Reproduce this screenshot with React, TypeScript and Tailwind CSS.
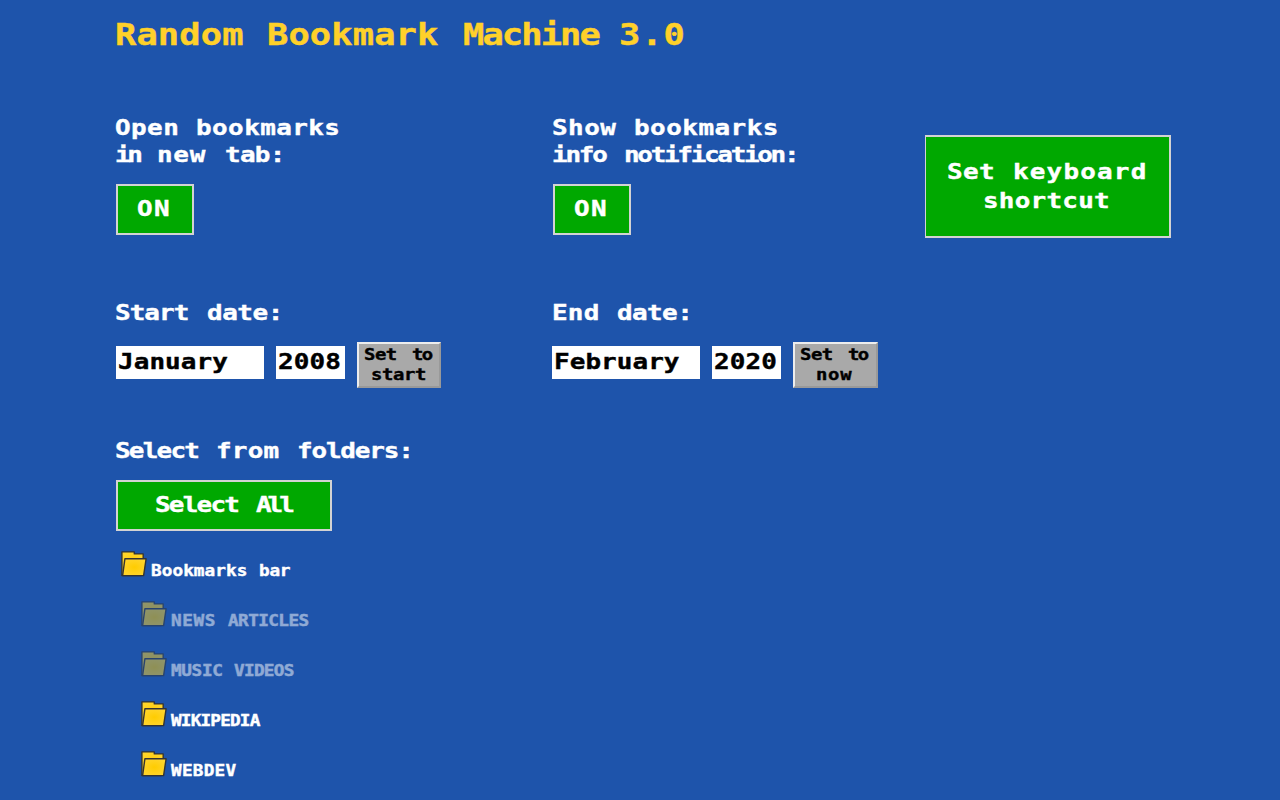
import React from "react";

type Word = { text: string; box: string };

function Line({ words, className = "" }: { words: Word[]; className?: string }) {
  return (
    <span className={`block whitespace-pre text-left ${className}`}>
      {words.map((w, i) => (
        <span key={i} className={`inline-block ${w.box}`}>
          <span className="inline-block origin-left scale-x-[1.18]">
            {i < words.length - 1 ? `${w.text} ` : w.text}
          </span>
        </span>
      ))}
    </span>
  );
}

function Toggle() {
  return (
    <button className="ml-px mt-4 flex h-[51px] w-[78px] items-center border-2 border-[#d3d3d3] bg-[#00a800] pb-0.5 pl-[19px] leading-[29px]">
      <Line words={[{ text: "ON", box: "tracking-[1.1px]" }]} />
    </button>
  );
}

type DateProps = { label: Word[]; month: string; year: string; action: Word; inset: string; wide: string; indent: string };

function DateField({ label, month, year, action, inset, wide, indent }: DateProps) {
  return (
    <section>
      <h2>
        <Line words={label} />
      </h2>
      <div className={`mt-4 flex h-[46px] items-start text-black ${inset}`}>
        <div className="mr-3 mt-1 h-[33px] w-[148px] bg-white pl-0.5 leading-[31px]">
          <Line words={[{ text: month, box: "tracking-[0.05px]" }]} />
        </div>
        <div className="mr-3 mt-1 h-[33px] w-[69px] bg-white pl-0.5 leading-[31px]">
          <Line words={[{ text: year, box: "tracking-[0.1px]" }]} />
        </div>
        <button
          className={`h-[46px] border-2 border-b-[#999999] border-l-[#ededed] border-r-[#999999] border-t-[#ededed] bg-[#a9a9a9] pl-[5px] text-[16px] leading-5 ${wide}`}
        >
          <Line
            words={[
              { text: "Set", box: "w-[48px] tracking-[-0.4px]" },
              { text: "to", box: "w-[21px] tracking-[-1.4px]" },
            ]}
          />
          <Line words={[action]} className={indent} />
        </button>
      </div>
    </section>
  );
}

function FolderIcon() {
  return (
    <svg width="26" height="26" viewBox="0 0 26 26" className="shrink-0">
      <defs>
        <radialGradient id="folderFill">
          <stop offset="0" stopColor="#ffcc00" />
          <stop offset="1" stopColor="#ffd42a" />
        </radialGradient>
      </defs>
      <g stroke="#333333" strokeWidth="1.4" strokeLinejoin="round" fill="url(#folderFill)">
        <path d="M.9 24.6V.9H13.3V2.9H22.2V8L20 24.6Z" />
        <path d="M3.9 7.8H25.1L22.6 24.6H1.6Z" />
      </g>
    </svg>
  );
}

const folders: { words: Word[]; row: string }[] = [
  {
    words: [
      { text: "Bookmarks", box: "w-[108px] tracking-[0.05px]" },
      { text: "bar", box: "tracking-[-0.2px]" },
    ],
    row: "pl-1.5",
  },
  {
    words: [
      { text: "NEWS", box: "w-[57px] tracking-[0.5px]" },
      { text: "ARTICLES", box: "tracking-[-0.5px]" },
    ],
    row: "pl-[26px] opacity-50",
  },
  {
    words: [
      { text: "MUSIC", box: "w-[63px] tracking-[-0.3px]" },
      { text: "VIDEOS", box: "tracking-[-0.6px]" },
    ],
    row: "pl-[26px] opacity-50",
  },
  { words: [{ text: "WIKIPEDIA", box: "tracking-[-0.7px]" }], row: "pl-[26px]" },
  { words: [{ text: "WEBDEV", box: "tracking-[0.2px]" }], row: "pl-[26px]" },
];

export default function App() {
  return (
    <main className="h-[800px] w-full overflow-hidden bg-[#1e54ab] pl-[115px] pt-[17px] font-['DejaVu_Sans_Mono','Liberation_Mono',monospace] text-[22px] font-bold leading-[27px] text-white [-webkit-text-stroke:0.4px_currentColor]">
      <h1 className="text-[30px] leading-9 text-[#ffd12a]">
        <Line
          words={[
            { text: "Random", box: "w-[152px] tracking-[0.1px]" },
            { text: "Bookmark", box: "w-[196px] tracking-[0.1px]" },
            { text: "Machine", box: "w-[156px] tracking-[-1.6px]" },
            { text: "3.0", box: "tracking-[0.8px]" },
          ]}
        />
      </h1>

      <div className="mt-[61px] flex h-[124px]">
        <section className="w-[437px]">
          <h2>
            <Line
              words={[
                { text: "Open", box: "w-[81px] tracking-[0.35px]" },
                { text: "bookmarks", box: "tracking-[0.35px]" },
              ]}
            />
            <Line
              words={[
                { text: "in", box: "w-[42px] tracking-[-2.8px]" },
                { text: "new", box: "w-[68px] tracking-[0.6px]" },
                { text: "tab:", box: "tracking-[-0.6px]" },
              ]}
            />
          </h2>
          <Toggle />
        </section>
        <section className="w-[373px]">
          <h2>
            <Line
              words={[
                { text: "Show", box: "w-[82px] tracking-[0.4px]" },
                { text: "bookmarks", box: "tracking-[0.4px]" },
              ]}
            />
            <Line
              words={[
                { text: "info", box: "w-[72px] tracking-[-1.9px]" },
                { text: "notification:", box: "tracking-[-1.95px]" },
              ]}
            />
          </h2>
          <Toggle />
        </section>
        <button className="mt-[21px] flex h-[103px] w-[246px] flex-col items-start justify-center border-2 border-l border-[#d3d3d3] bg-[#00a800] pb-0.5 pl-[21px] leading-[29px]">
          <Line
            words={[
              { text: "Set", box: "w-[66px] tracking-[0.35px]" },
              { text: "keyboard", box: "tracking-[1px]" },
            ]}
          />
          <Line words={[{ text: "shortcut", box: "tracking-[0.2px]" }]} className="ml-9" />
        </button>
      </div>

      <div className="mt-[61px] flex">
        <div className="w-[437px]">
          <DateField
            label={[
              { text: "Start", box: "w-[92px] tracking-[-0.8px]" },
              { text: "date:", box: "tracking-[-0.4px]" },
            ]}
            month="January"
            year="2008"
            action={{ text: "start", box: "tracking-[-0.3px]" }}
            inset="pl-px"
            wide="w-[84px]"
            indent="pl-[7px]"
          />
        </div>
        <DateField
          label={[
            { text: "End", box: "w-[65px] tracking-[0.2px]" },
            { text: "date:", box: "tracking-[-0.5px]" },
          ]}
          month="February"
          year="2020"
          action={{ text: "now", box: "tracking-[0.6px]" }}
          inset="pl-0"
          wide="w-[85px]"
          indent="pl-4"
        />
      </div>

      <section className="mt-[49px]">
        <h2>
          <Line
            words={[
              { text: "Select", box: "w-[101px] tracking-[-1.5px]" },
              { text: "from", box: "w-[81px] tracking-[0.2px]" },
              { text: "folders:", box: "tracking-[-1px]" },
            ]}
          />
        </h2>
        <button className="ml-px mt-4 flex h-[51px] w-[216px] items-center border-2 border-[#d3d3d3] bg-[#00a800] pb-0.5 pl-[37px]">
          <Line
            words={[
              { text: "Select", box: "w-[101px] tracking-[-1.5px]" },
              { text: "All", box: "tracking-[-3.4px]" },
            ]}
          />
        </button>
        <ul className="mt-5 text-[15px]">
          {folders.map((f, i) => (
            <li key={i} className={`flex h-[50px] items-start ${f.row}`}>
              <FolderIcon />
              <Line words={f.words} className="ml-[3.5px] mt-[7px]" />
            </li>
          ))}
        </ul>
      </section>
    </main>
  );
}
